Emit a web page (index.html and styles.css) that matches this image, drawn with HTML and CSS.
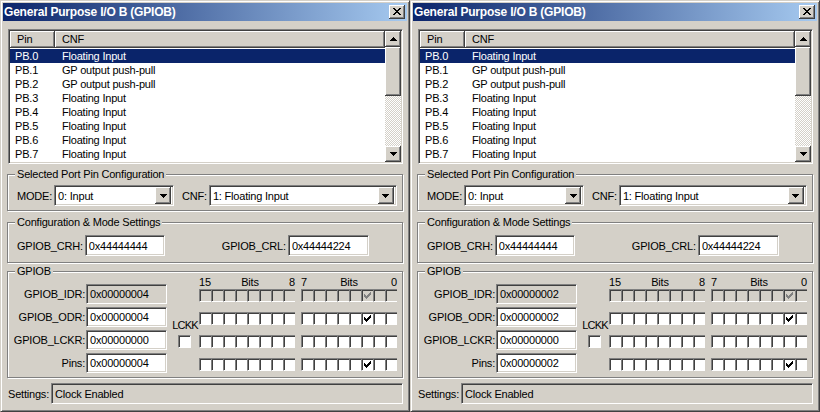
FILE: index.html
```html
<!DOCTYPE html>
<html>
<head>
<meta charset="utf-8">
<link rel="stylesheet" href="styles.css">
</head>
<body>
<div class="win">
  <div class="titlebar">
    <span class="title">General Purpose I/O B (GPIOB)</span>
    <span class="close"><svg width="8" height="7" viewBox="0 0 8 7"><path d="M0 0h2v1H0zM6 0h2v1H6zM1 1h2v1H1zM5 1h2v1H5zM2 2h4v1H2zM3 3h2v1H3zM2 4h4v1H2zM1 5h2v1H1zM5 5h2v1H5zM0 6h2v1H0zM6 6h2v1H6z"/></svg></span>
  </div>
  <div class="content">
    <div class="list">
      <div class="list-main">
        <div class="thead"><span class="th th1">Pin</span><span class="th th2">CNF</span></div>
        <div class="row sel"><span class="c1">PB.0</span><span class="c2">Floating Input</span></div>
        <div class="row"><span class="c1">PB.1</span><span class="c2">GP output push-pull</span></div>
        <div class="row"><span class="c1">PB.2</span><span class="c2">GP output push-pull</span></div>
        <div class="row"><span class="c1">PB.3</span><span class="c2">Floating Input</span></div>
        <div class="row"><span class="c1">PB.4</span><span class="c2">Floating Input</span></div>
        <div class="row"><span class="c1">PB.5</span><span class="c2">Floating Input</span></div>
        <div class="row"><span class="c1">PB.6</span><span class="c2">Floating Input</span></div>
        <div class="row"><span class="c1">PB.7</span><span class="c2">Floating Input</span></div>
      </div>
      <div class="sb">
        <span class="btn3d sbbtn"><svg width="7" height="4" viewBox="0 0 7 4"><path d="M3 0h1v1H3zM2 1h3v1H2zM1 2h5v1H1zM0 3h7v1H0z"/></svg></span>
        <span class="btn3d thumb"></span>
        <span class="track"></span>
        <span class="btn3d sbbtn"><svg width="7" height="4" viewBox="0 0 7 4"><path d="M0 0h7v1H0zM1 1h5v1H1zM2 2h3v1H2zM3 3h1v1H3z"/></svg></span>
      </div>
    </div>

    <div class="grp g1">
      <span class="grp-label">Selected Port Pin Configuration</span>
      <span class="lbl">MODE:</span>
      <div class="combo combo-mode"><span class="combo-text">0: Input</span><span class="btn3d dd"><svg width="7" height="4" viewBox="0 0 7 4"><path d="M0 0h7v1H0zM1 1h5v1H1zM2 2h3v1H2zM3 3h1v1H3z"/></svg></span></div>
      <span class="lbl lbl-cnf">CNF:</span>
      <div class="combo combo-cnf"><span class="combo-text">1: Floating Input</span><span class="btn3d dd"><svg width="7" height="4" viewBox="0 0 7 4"><path d="M0 0h7v1H0zM1 1h5v1H1zM2 2h3v1H2zM3 3h1v1H3z"/></svg></span></div>
    </div>

    <div class="grp g2">
      <span class="grp-label">Configuration &amp; Mode Settings</span>
      <span class="lbl">GPIOB_CRH:</span>
      <span class="field f-crh">0x44444444</span>
      <span class="lbl lbl-crl">GPIOB_CRL:</span>
      <span class="field f-crl">0x44444224</span>
    </div>

    <div class="grp g3">
      <span class="grp-label">GPIOB</span>
      <div class="regs">
        <div class="reg"><span class="rlbl">GPIOB_IDR:</span><span class="field rf ro">0x00000004</span></div>
        <div class="reg"><span class="rlbl">GPIOB_ODR:</span><span class="field rf">0x00000004</span></div>
        <div class="reg"><span class="rlbl">GPIOB_LCKR:</span><span class="field rf">0x00000000</span></div>
        <div class="reg"><span class="rlbl">Pins:</span><span class="field rf">0x00000004</span></div>
      </div>
      <div class="lckk"><span class="lckk-t">LCKK</span><i class="cb"></i></div>
      <div class="bits">
        <div class="bhead"><div class="bgrp"><span>15</span><span>Bits</span><span>8</span></div><div class="bgrp"><span>7</span><span>Bits</span><span>0</span></div></div>
        <div class="brow dis"><div class="bgrp"><i class="cb"></i><i class="cb"></i><i class="cb"></i><i class="cb"></i><i class="cb"></i><i class="cb"></i><i class="cb"></i><i class="cb"></i></div><div class="bgrp"><i class="cb"></i><i class="cb"></i><i class="cb"></i><i class="cb"></i><i class="cb"></i><i class="cb"><svg class="ck" width="7" height="7" viewBox="0 0 7 7"><path d="M6 0h1v1H6zM5 1h2v1H5zM0 2h1v1H0zM4 2h3v1H4zM0 3h2v1H0zM3 3h3v1H3zM0 4h5v1H0zM1 5h3v1H1zM2 6h1v1H2z"/></svg></i><i class="cb"></i><i class="cb"></i></div></div>
        <div class="brow"><div class="bgrp"><i class="cb"></i><i class="cb"></i><i class="cb"></i><i class="cb"></i><i class="cb"></i><i class="cb"></i><i class="cb"></i><i class="cb"></i></div><div class="bgrp"><i class="cb"></i><i class="cb"></i><i class="cb"></i><i class="cb"></i><i class="cb"></i><i class="cb"><svg class="ck" width="7" height="7" viewBox="0 0 7 7"><path d="M6 0h1v1H6zM5 1h2v1H5zM0 2h1v1H0zM4 2h3v1H4zM0 3h2v1H0zM3 3h3v1H3zM0 4h5v1H0zM1 5h3v1H1zM2 6h1v1H2z"/></svg></i><i class="cb"></i><i class="cb"></i></div></div>
        <div class="brow"><div class="bgrp"><i class="cb"></i><i class="cb"></i><i class="cb"></i><i class="cb"></i><i class="cb"></i><i class="cb"></i><i class="cb"></i><i class="cb"></i></div><div class="bgrp"><i class="cb"></i><i class="cb"></i><i class="cb"></i><i class="cb"></i><i class="cb"></i><i class="cb"></i><i class="cb"></i><i class="cb"></i></div></div>
        <div class="brow"><div class="bgrp"><i class="cb"></i><i class="cb"></i><i class="cb"></i><i class="cb"></i><i class="cb"></i><i class="cb"></i><i class="cb"></i><i class="cb"></i></div><div class="bgrp"><i class="cb"></i><i class="cb"></i><i class="cb"></i><i class="cb"></i><i class="cb"></i><i class="cb"><svg class="ck" width="7" height="7" viewBox="0 0 7 7"><path d="M6 0h1v1H6zM5 1h2v1H5zM0 2h1v1H0zM4 2h3v1H4zM0 3h2v1H0zM3 3h3v1H3zM0 4h5v1H0zM1 5h3v1H1zM2 6h1v1H2z"/></svg></i><i class="cb"></i><i class="cb"></i></div></div>
      </div>
    </div>

    <div class="status"><span class="lbl">Settings:</span><span class="field ro sfield">Clock Enabled</span></div>
  </div>
</div>

<div class="win">
  <div class="titlebar">
    <span class="title">General Purpose I/O B (GPIOB)</span>
    <span class="close"><svg width="8" height="7" viewBox="0 0 8 7"><path d="M0 0h2v1H0zM6 0h2v1H6zM1 1h2v1H1zM5 1h2v1H5zM2 2h4v1H2zM3 3h2v1H3zM2 4h4v1H2zM1 5h2v1H1zM5 5h2v1H5zM0 6h2v1H0zM6 6h2v1H6z"/></svg></span>
  </div>
  <div class="content">
    <div class="list">
      <div class="list-main">
        <div class="thead"><span class="th th1">Pin</span><span class="th th2">CNF</span></div>
        <div class="row sel"><span class="c1">PB.0</span><span class="c2">Floating Input</span></div>
        <div class="row"><span class="c1">PB.1</span><span class="c2">GP output push-pull</span></div>
        <div class="row"><span class="c1">PB.2</span><span class="c2">GP output push-pull</span></div>
        <div class="row"><span class="c1">PB.3</span><span class="c2">Floating Input</span></div>
        <div class="row"><span class="c1">PB.4</span><span class="c2">Floating Input</span></div>
        <div class="row"><span class="c1">PB.5</span><span class="c2">Floating Input</span></div>
        <div class="row"><span class="c1">PB.6</span><span class="c2">Floating Input</span></div>
        <div class="row"><span class="c1">PB.7</span><span class="c2">Floating Input</span></div>
      </div>
      <div class="sb">
        <span class="btn3d sbbtn"><svg width="7" height="4" viewBox="0 0 7 4"><path d="M3 0h1v1H3zM2 1h3v1H2zM1 2h5v1H1zM0 3h7v1H0z"/></svg></span>
        <span class="btn3d thumb"></span>
        <span class="track"></span>
        <span class="btn3d sbbtn"><svg width="7" height="4" viewBox="0 0 7 4"><path d="M0 0h7v1H0zM1 1h5v1H1zM2 2h3v1H2zM3 3h1v1H3z"/></svg></span>
      </div>
    </div>

    <div class="grp g1">
      <span class="grp-label">Selected Port Pin Configuration</span>
      <span class="lbl">MODE:</span>
      <div class="combo combo-mode"><span class="combo-text">0: Input</span><span class="btn3d dd"><svg width="7" height="4" viewBox="0 0 7 4"><path d="M0 0h7v1H0zM1 1h5v1H1zM2 2h3v1H2zM3 3h1v1H3z"/></svg></span></div>
      <span class="lbl lbl-cnf">CNF:</span>
      <div class="combo combo-cnf"><span class="combo-text">1: Floating Input</span><span class="btn3d dd"><svg width="7" height="4" viewBox="0 0 7 4"><path d="M0 0h7v1H0zM1 1h5v1H1zM2 2h3v1H2zM3 3h1v1H3z"/></svg></span></div>
    </div>

    <div class="grp g2">
      <span class="grp-label">Configuration &amp; Mode Settings</span>
      <span class="lbl">GPIOB_CRH:</span>
      <span class="field f-crh">0x44444444</span>
      <span class="lbl lbl-crl">GPIOB_CRL:</span>
      <span class="field f-crl">0x44444224</span>
    </div>

    <div class="grp g3">
      <span class="grp-label">GPIOB</span>
      <div class="regs">
        <div class="reg"><span class="rlbl">GPIOB_IDR:</span><span class="field rf ro">0x00000002</span></div>
        <div class="reg"><span class="rlbl">GPIOB_ODR:</span><span class="field rf">0x00000002</span></div>
        <div class="reg"><span class="rlbl">GPIOB_LCKR:</span><span class="field rf">0x00000000</span></div>
        <div class="reg"><span class="rlbl">Pins:</span><span class="field rf">0x00000002</span></div>
      </div>
      <div class="lckk"><span class="lckk-t">LCKK</span><i class="cb"></i></div>
      <div class="bits">
        <div class="bhead"><div class="bgrp"><span>15</span><span>Bits</span><span>8</span></div><div class="bgrp"><span>7</span><span>Bits</span><span>0</span></div></div>
        <div class="brow dis"><div class="bgrp"><i class="cb"></i><i class="cb"></i><i class="cb"></i><i class="cb"></i><i class="cb"></i><i class="cb"></i><i class="cb"></i><i class="cb"></i></div><div class="bgrp"><i class="cb"></i><i class="cb"></i><i class="cb"></i><i class="cb"></i><i class="cb"></i><i class="cb"></i><i class="cb"><svg class="ck" width="7" height="7" viewBox="0 0 7 7"><path d="M6 0h1v1H6zM5 1h2v1H5zM0 2h1v1H0zM4 2h3v1H4zM0 3h2v1H0zM3 3h3v1H3zM0 4h5v1H0zM1 5h3v1H1zM2 6h1v1H2z"/></svg></i><i class="cb"></i></div></div>
        <div class="brow"><div class="bgrp"><i class="cb"></i><i class="cb"></i><i class="cb"></i><i class="cb"></i><i class="cb"></i><i class="cb"></i><i class="cb"></i><i class="cb"></i></div><div class="bgrp"><i class="cb"></i><i class="cb"></i><i class="cb"></i><i class="cb"></i><i class="cb"></i><i class="cb"></i><i class="cb"><svg class="ck" width="7" height="7" viewBox="0 0 7 7"><path d="M6 0h1v1H6zM5 1h2v1H5zM0 2h1v1H0zM4 2h3v1H4zM0 3h2v1H0zM3 3h3v1H3zM0 4h5v1H0zM1 5h3v1H1zM2 6h1v1H2z"/></svg></i><i class="cb"></i></div></div>
        <div class="brow"><div class="bgrp"><i class="cb"></i><i class="cb"></i><i class="cb"></i><i class="cb"></i><i class="cb"></i><i class="cb"></i><i class="cb"></i><i class="cb"></i></div><div class="bgrp"><i class="cb"></i><i class="cb"></i><i class="cb"></i><i class="cb"></i><i class="cb"></i><i class="cb"></i><i class="cb"></i><i class="cb"></i></div></div>
        <div class="brow"><div class="bgrp"><i class="cb"></i><i class="cb"></i><i class="cb"></i><i class="cb"></i><i class="cb"></i><i class="cb"></i><i class="cb"></i><i class="cb"></i></div><div class="bgrp"><i class="cb"></i><i class="cb"></i><i class="cb"></i><i class="cb"></i><i class="cb"></i><i class="cb"></i><i class="cb"><svg class="ck" width="7" height="7" viewBox="0 0 7 7"><path d="M6 0h1v1H6zM5 1h2v1H5zM0 2h1v1H0zM4 2h3v1H4zM0 3h2v1H0zM3 3h3v1H3zM0 4h5v1H0zM1 5h3v1H1zM2 6h1v1H2z"/></svg></i><i class="cb"></i></div></div>
      </div>
    </div>

    <div class="status"><span class="lbl">Settings:</span><span class="field ro sfield">Clock Enabled</span></div>
  </div>
</div>
</body>
</html>
```

FILE: styles.css
```css
* { box-sizing: border-box; }
html, body { margin: 0; padding: 0; }
body {
  width: 820px;
  height: 412px;
  overflow: hidden;
  background: #d4d0c8;
  font: 11px "Liberation Sans", Arial, sans-serif;
  letter-spacing: -0.2px;
  color: #000;
  display: flex;
}
svg { display: block; fill: currentColor; shape-rendering: crispEdges; }

.win {
  width: 410px;
  height: 412px;
  flex: none;
  border: 1px solid;
  border-color: #d4d0c8 #404040 #404040 #d4d0c8;
  box-shadow: inset 1px 1px #fff, inset -1px -1px #808080;
  padding: 2px;
  display: flex;
  flex-direction: column;
}
.titlebar {
  height: 18px;
  flex: none;
  background: linear-gradient(to right, #0a246a, #a6caf0);
  display: flex;
  align-items: center;
  justify-content: space-between;
  padding: 0 2px 0 1px;
}
.title { color: #fff; font-weight: bold; font-size: 12px; letter-spacing: -0.2px; }
.close {
  width: 16px;
  height: 14px;
  background: #d4d0c8;
  box-shadow: inset -1px -1px #404040, inset 1px 1px #fff, inset -2px -2px #808080;
  display: flex;
  align-items: center;
  justify-content: center;
  padding: 0 1px 1px 0;
}
.btn3d {
  background: #d4d0c8;
  box-shadow: inset -1px -1px #404040, inset 1px 1px #fff, inset -2px -2px #808080;
  display: flex;
  align-items: center;
  justify-content: center;
}

.content {
  flex: 1;
  display: flex;
  flex-direction: column;
  padding: 0 4px;
}

/* list view */
.list {
  margin: 8px 0 0 1px;
  height: 135px;
  flex: none;
  border: 1px solid;
  border-color: #808080 #fff #fff #808080;
  box-shadow: inset 1px 1px #404040, inset -1px -1px #d4d0c8;
  padding: 1px;
  background: #fff;
  display: flex;
}
.list-main { flex: 1; display: flex; flex-direction: column; }
.thead { display: flex; height: 17px; flex: none; margin-bottom: 1px; }
.th {
  background: #d4d0c8;
  box-shadow: inset -1px -1px #404040, inset 1px 1px #fff, inset -2px -2px #808080;
  line-height: 17px;
  padding-left: 7px;
}
.th1 { width: 45px; }
.th2 { flex: 1; }
.row { display: flex; height: 14px; line-height: 15px; }
.row.sel { background: #0a246a; color: #fff; }
.c1 { width: 45px; padding-left: 5px; }
.c2 { padding-left: 7px; }

.sb { width: 16px; display: flex; flex-direction: column; }
.sbbtn { height: 16px; flex: none; }
.thumb { height: 49px; flex: none; }
.track {
  flex: 1;
  background: repeating-conic-gradient(#fff 0 25%, #d4d0c8 0 50%) 0 0 / 2px 2px;
}

/* group boxes */
.grp {
  position: relative;
  border: 1px solid #808080;
  box-shadow: inset 1px 1px #fff, 1px 1px #fff;
  display: flex;
  align-items: center;
}
.grp-label {
  position: absolute;
  top: -7px;
  left: 7px;
  padding: 0 2px;
  line-height: 13px;
  background: #d4d0c8;
}
.lbl { white-space: nowrap; }

.g1 { margin-top: 10px; padding: 10px 0 4px 9px; }
.combo {
  height: 21px;
  border: 1px solid;
  border-color: #808080 #fff #fff #808080;
  box-shadow: inset 1px 1px #404040, inset -1px -1px #d4d0c8;
  background: #fff;
  padding: 2px;
  display: flex;
  align-items: center;
}
.combo-mode { width: 120px; margin-left: 2px; }
.combo-cnf { width: 188px; margin-left: 2px; }
.lbl-cnf { margin-left: 8px; }
.combo-text { flex: 1; padding-left: 1px; }
.dd { width: 16px; height: 17px; }

.g2 { margin-top: 11px; padding: 12px 0 6px 9px; }
.field {
  height: 21px;
  border: 1px solid;
  border-color: #808080 #fff #fff #808080;
  box-shadow: inset 1px 1px #404040, inset -1px -1px #d4d0c8;
  background: #fff;
  padding: 0 3px;
  display: flex;
  align-items: center;
}
.field.ro { background: #d4d0c8; }
.f-crh { width: 80px; margin-left: 2px; }
.lbl-crl { margin-left: 57px; }
.f-crl { width: 81px; margin-left: 2px; }

.g3 { margin-top: 8px; padding: 4px 0 4px 1px; align-items: flex-start; }
.regs { margin-top: 8px; display: flex; flex-direction: column; gap: 3px; }
.reg { display: flex; align-items: center; height: 20px; }
.rlbl { width: 76px; text-align: right; margin-right: 1px; }
.rf { width: 81px; height: 20px; }

.lckk {
  width: 26px;
  margin-left: 5px;
  display: flex;
  flex-direction: column;
  align-items: center;
}
.lckk-t { margin-top: 43px; line-height: 13px; letter-spacing: -0.8px; }
.lckk .cb { margin-top: 3px; margin-right: 2px; }

.bits { margin-left: 1px; display: flex; flex-direction: column; }
.bhead { display: flex; gap: 6px; height: 13px; line-height: 13px; }
.bhead .bgrp { justify-content: space-between; }
.bgrp { width: 96px; display: flex; }
.brow { display: flex; gap: 6px; height: 13px; margin-top: 10px; }
.bhead + .brow { margin-top: 0; }

.cb {
  display: block;
  width: 12px;
  height: 13px;
  flex: none;
  background: #fff;
  border-top: 1px solid #808080;
  border-left: 1px solid #808080;
  border-bottom: 1px solid #fff;
  box-shadow: inset 1px 1px #404040;
  padding: 2px 0 0 2px;
  color: #000;
}
.lckk .cb { width: 13px; border-right: 1px solid #fff; }
.brow.dis .cb { background: #d4d0c8; color: #808080; }

.status { margin-top: 5px; display: flex; align-items: center; padding-left: 1px; }
.sfield { flex: 1; margin-left: 2px; }
```
